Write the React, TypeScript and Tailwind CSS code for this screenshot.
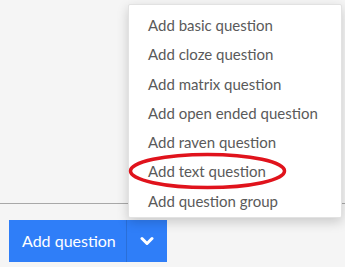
import React from 'react';

const items = [
  'Add basic question',
  'Add cloze question',
  'Add matrix question',
  'Add open ended question',
  'Add raven question',
  'Add text question',
  'Add question group',
];

const App: React.FC = () => {
  return (
    <div className="w-[345px] h-[267px] bg-[#f5f5f5] overflow-hidden relative" style={{ fontFamily: 'Lato, "Liberation Sans", sans-serif' }}>
      <div className="h-[203px]" />
      <div className="h-px bg-[#a8a8a8]" />
      <div className="pl-[9px] pt-4">
        <div className="flex h-[42px] w-[158px] bg-[#2f7ef8] text-white">
          <button className="w-[117px] text-[16px] pl-[13px] text-left whitespace-nowrap">Add question</button>
          <div className="w-px bg-[#2a6fd8]" />
          <button className="flex-1 flex items-center justify-center">
            <svg width="14" height="10" viewBox="0 0 14 10">
              <path d="M2 2.5 L7 7.5 L12 2.5" fill="none" stroke="white" strokeWidth="3" strokeLinecap="round" strokeLinejoin="round" />
            </svg>
          </button>
        </div>
      </div>

      {/* dropdown menu */}
      <div className="absolute left-[128px] top-[4px] w-[214px] h-[214px] bg-white border border-[#e2e2e2] rounded-[2px] shadow-[0_4px_12px_rgba(0,0,0,0.18)] pt-[6px]">
        {items.map(item => (
          <div key={item} className="h-[29.3px] leading-[29.3px] pl-[19px] text-[15px] text-[#5a5a5a]">
            {item}
          </div>
        ))}
      </div>

      {/* highlight ring */}
      <svg className="absolute left-0 top-0 pointer-events-none" width="345" height="267">
        <ellipse cx="207.5" cy="171" rx="77" ry="16.5" fill="none" stroke="#e0131c" strokeWidth="3.5" />
      </svg>
    </div>
  );
};

export default App;
